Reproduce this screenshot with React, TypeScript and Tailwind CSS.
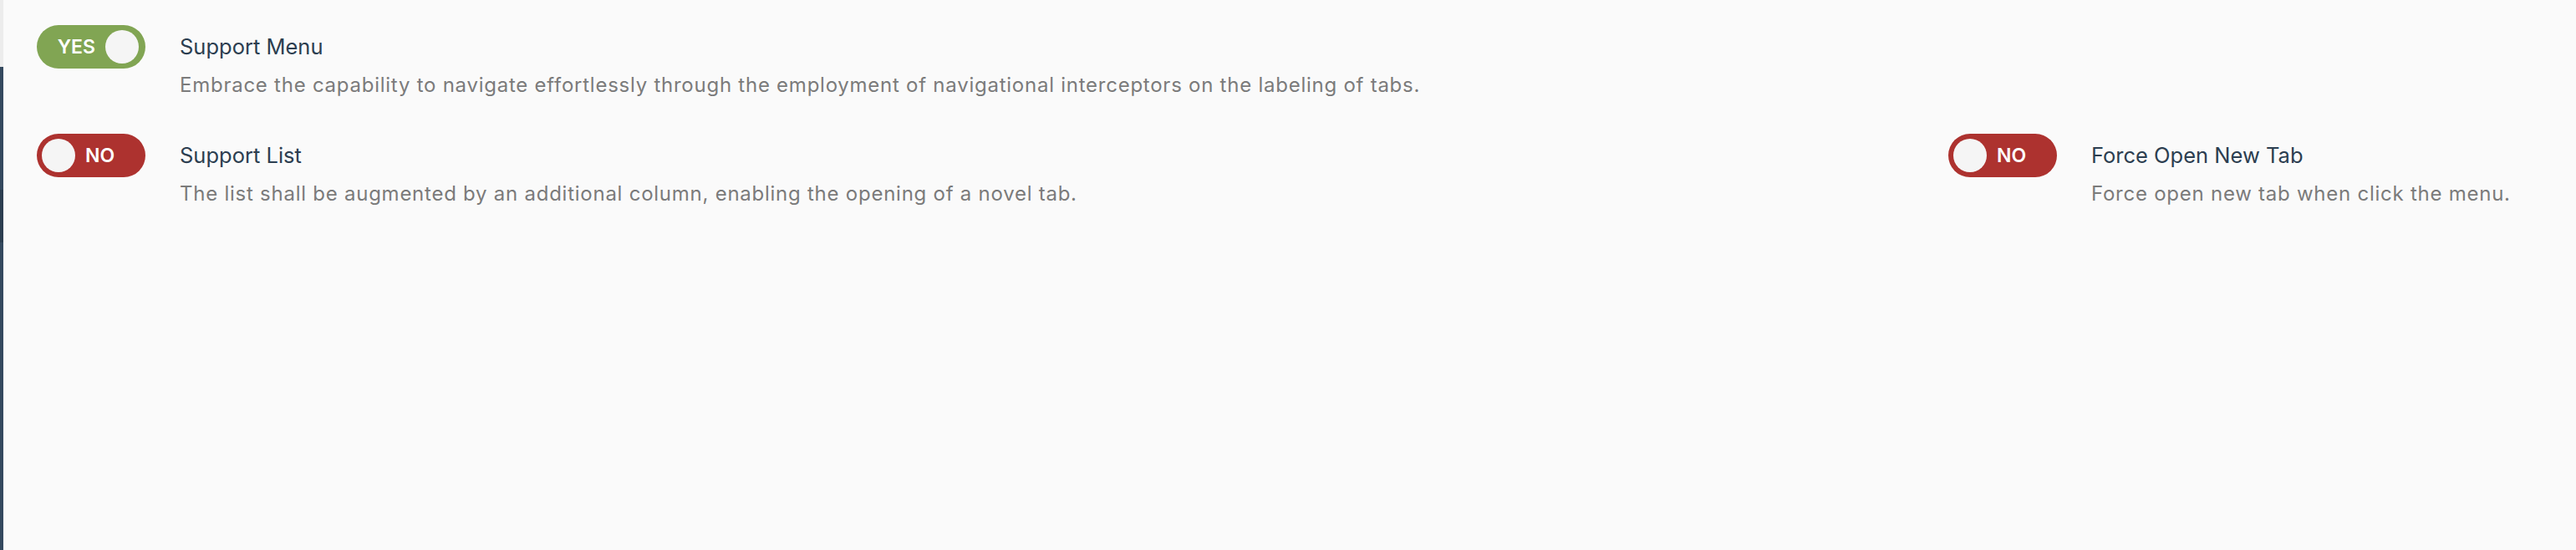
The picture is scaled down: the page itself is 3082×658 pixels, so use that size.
import { useState } from "react";

interface SettingItem {
  key: string;
  title: string;
  desc: string;
  value: boolean;
}

function Switch({ on, onClick }: { on: boolean; onClick: () => void }) {
  return (
    <button
      onClick={onClick}
      className={`flex h-[52px] w-[130px] shrink-0 items-center gap-[12px] rounded-full px-[6px] ${
        on ? "justify-end bg-[#81a553] pr-[8px]" : "justify-start bg-[#ad322f]"
      }`}
    >
      {on && <span className="text-[23px] font-semibold leading-none text-white">YES</span>}
      <span className="h-[40px] w-[40px] rounded-full bg-[#f5f5f5]" />
      {!on && <span className="text-[23px] font-semibold leading-none text-white">NO</span>}
    </button>
  );
}

function Setting({ item, onToggle }: { item: SettingItem; onToggle: () => void }) {
  return (
    <div className="flex items-start gap-[41px]">
      <Switch on={item.value} onClick={onToggle} />
      <div>
        <p className="text-[25.5px] leading-[52px] text-[#2c3e50]">{item.title}</p>
        <p className="mt-[2px] text-[24px] leading-[36px] tracking-[0.75px] text-[#7b7b7b]">{item.desc}</p>
      </div>
    </div>
  );
}

export default function App() {
  const [settings, setSettings] = useState<SettingItem[]>([
    {
      key: "menu",
      title: "Support Menu",
      desc: "Embrace the capability to navigate effortlessly through the employment of navigational interceptors on the labeling of tabs.",
      value: true,
    },
    {
      key: "list",
      title: "Support List",
      desc: "The list shall be augmented by an additional column, enabling the opening of a novel tab.",
      value: false,
    },
    {
      key: "newTab",
      title: "Force Open New Tab",
      desc: "Force open new tab when click the menu.",
      value: false,
    },
  ]);

  const toggle = (key: string) => {
    setSettings(settings.map((s) => (s.key === key ? { ...s, value: !s.value } : s)));
  };

  return (
    <div className="flex h-[658px] w-full" style={{ fontFamily: "Inter, 'Noto Sans', sans-serif" }}>
      {/* sidebar edge */}
      <div className="flex w-[4px] shrink-0 flex-col">
        <div className="h-[80px] bg-[#ececec]" />
        <div className="h-[147px] bg-[#34495e]" />
        <div className="h-[63px] bg-[#2c3e50]" />
        <div className="flex-1 bg-[#34495e]" />
      </div>

      <div className="flex-1 bg-[#fafafa] pl-[40px] pt-[30px]">
        <Setting item={settings[0]} onToggle={() => toggle(settings[0].key)} />
        <div className="mt-[40px] grid grid-cols-[1fr_751px]">
          <Setting item={settings[1]} onToggle={() => toggle(settings[1].key)} />
          <Setting item={settings[2]} onToggle={() => toggle(settings[2].key)} />
        </div>
      </div>
    </div>
  );
}
